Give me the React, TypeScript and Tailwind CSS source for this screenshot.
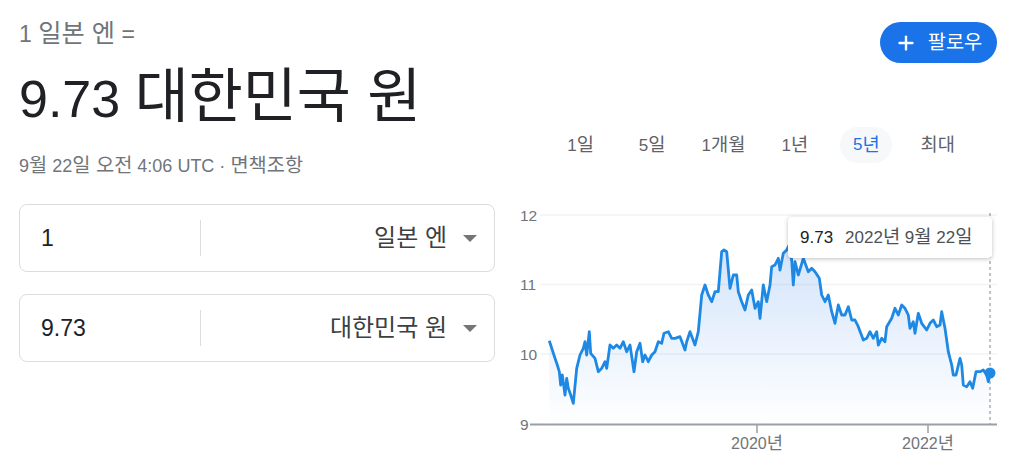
import { Plus } from "lucide-react";

// chart trace in 3x zoom coords relative to (500,195)
const RAW: [number, number][] = [
  [148, 437], [165, 490], [172, 510], [178, 530], [182, 570], [187, 540], [195, 600], [200, 550],
  [205, 580], [212, 600], [220, 625], [230, 520], [240, 480], [250, 460], [255, 440], [260, 480],
  [268, 410], [272, 475], [285, 490], [295, 530], [305, 520], [315, 500], [320, 520], [330, 450],
  [340, 460], [350, 450], [360, 460], [370, 440], [380, 470], [390, 450], [402, 530], [410, 470],
  [420, 445], [428, 500], [435, 480], [445, 500], [455, 480], [465, 470], [475, 440], [485, 445],
  [492, 415], [505, 410], [515, 430], [525, 430], [540, 425], [555, 465], [560, 440], [570, 410],
  [585, 450], [595, 410], [605, 300], [615, 270], [625, 300], [635, 320], [645, 290], [655, 290],
  [665, 170], [672, 165], [680, 170], [690, 280], [700, 240], [710, 240], [715, 290], [725, 320],
  [735, 345], [745, 300], [755, 285], [765, 340], [775, 320], [780, 370], [790, 270], [800, 320],
  [810, 270], [815, 215], [825, 210], [835, 190], [840, 225], [850, 175], [860, 165], [868, 150],
  [875, 195], [880, 270], [885, 200], [895, 240], [910, 190], [925, 230], [935, 220], [945, 230],
  [958, 250], [965, 300], [975, 320], [985, 300], [995, 350], [1005, 385], [1015, 330], [1025, 360],
  [1035, 360], [1045, 335], [1055, 375], [1065, 375], [1075, 395], [1090, 435], [1100, 430],
  [1110, 410], [1120, 430], [1130, 410], [1135, 450], [1145, 430], [1155, 440], [1160, 395],
  [1175, 370], [1185, 340], [1195, 360], [1205, 330], [1215, 340], [1225, 360], [1230, 400],
  [1240, 380], [1245, 415], [1255, 355], [1265, 385], [1280, 405], [1290, 385], [1300, 375],
  [1310, 395], [1320, 390], [1325, 350], [1335, 400], [1345, 470], [1355, 510], [1360, 540],
  [1368, 540], [1380, 490], [1385, 510], [1390, 570], [1400, 575], [1410, 560], [1418, 580],
  [1428, 530], [1440, 530], [1450, 525], [1460, 540], [1465, 560], [1471, 535],
];

const POINTS = RAW.map(([x, y]) => [500 + x / 3, 195 + y / 3]);
const LINE = POINTS.map(([x, y], i) => `${i ? "L" : "M"}${x.toFixed(1)} ${y.toFixed(1)}`).join(" ");
const AREA = `${LINE} L${POINTS[POINTS.length - 1][0].toFixed(1)} 424 L${POINTS[0][0].toFixed(1)} 424 Z`;

const RANGES: [string, string][] = [["1", "일"], ["5", "일"], ["1", "개월"], ["1", "년"], ["5", "년"], ["", "최대"]];

// Hangul in the reference renders a little larger than Noto's
function K({ children }: { children: React.ReactNode }) {
  return <span className="text-[1.1em]">{children}</span>;
}

function CurrencyBox({ amount, currency }: { amount: string; currency: string }) {
  return (
    <div className="flex h-[68px] items-center rounded-lg border border-[#dadce0]">
      <div className="w-[180px] pl-[21px] text-[23px] text-[#202124]">{amount}</div>
      <div className="h-9 w-px bg-[#dadce0]" />
      <div className="flex flex-1 items-center justify-end gap-[16px] pr-[17px]">
        <span className="text-[24px] text-[#3c4043]">{currency}</span>
        <span className="h-0 w-0 border-x-[7px] border-t-[7px] border-x-transparent border-t-[#757575]" />
      </div>
    </div>
  );
}

function Chart() {
  const grid = [215, 284.5, 354];
  return (
    <div className="relative mt-[32px] h-[271px] w-[517px]">
      <svg width={517} height={271} viewBox="500 195 517 271">
        <defs>
          <linearGradient id="fill" x1="0" y1="240" x2="0" y2="424" gradientUnits="userSpaceOnUse">
            <stop offset="0" stopColor="#1a73e8" stopOpacity="0.2" />
            <stop offset="1" stopColor="#1a73e8" stopOpacity="0" />
          </linearGradient>
        </defs>
        {grid.map((y) => (
          <line key={y} x1={540} x2={997} y1={y} y2={y} stroke="#f1f3f4" strokeWidth={1.5} />
        ))}
        <path d={AREA} fill="url(#fill)" />
        <line x1={990} x2={990} y1={213} y2={424} stroke="#80868b" strokeWidth={1} strokeDasharray="3 3" />
        <path d={LINE} fill="none" stroke="#1e88e5" strokeWidth={2.8} strokeLinejoin="round" />
        <circle cx={990} cy={373} r={5.5} fill="#1e88e5" />
        <line x1={530} x2={997} y1={424.5} y2={424.5} stroke="#9aa0a6" strokeWidth={2} />
        <line x1={757} x2={757} y1={424} y2={433} stroke="#9aa0a6" strokeWidth={1.5} />
        <line x1={928} x2={928} y1={424} y2={433} stroke="#9aa0a6" strokeWidth={1.5} />
        {[["12", 220.5], ["11", 290], ["10", 359.5], ["9", 429.5]].map(([t, y]) => (
          <text key={t} x={520} y={y} fontSize={15.5} fill="#70757a">{t}</text>
        ))}
        <text x={757} y={449} fontSize={16} fill="#70757a" textAnchor="middle">2020<tspan fontSize={17.6}>년</tspan></text>
        <text x={928} y={449} fontSize={16} fill="#70757a" textAnchor="middle">2022<tspan fontSize={17.6}>년</tspan></text>
      </svg>
      <div className="absolute left-[288px] top-[22px] flex h-[41px] w-[204px] items-center gap-[12px] rounded bg-white pl-3 text-[17px] shadow-[0_1px_4px_rgba(0,0,0,0.25)]">
        <span className="text-[#202124]">9.73</span>
        <span className="text-[#4d5156]">2022<K>년</K> 9<K>월</K> 22<K>일</K></span>
      </div>
    </div>
  );
}

export default function App() {
  return (
    <div className="flex h-[466px] w-[1017px] bg-white font-['Liberation_Sans','Noto_Sans_CJK_KR',sans-serif]">
      <div className="w-[476px] ml-[19px] shrink-0">
        <div className="mt-[19px] text-[23px] leading-7 text-[#70757a]">1 <K>일본 엔</K> =</div>
        <div className="mt-[19px] text-[52px] leading-[60px] text-[#202124]">
          9.73 <span className="text-[1.13em]">대한민국 원</span>
        </div>
        <div className="mt-[24px] text-[18px] leading-6 text-[#70757a]">
          9<K>월</K> 22<K>일 오전</K> 4:06 UTC · <K>면책조항</K>
        </div>
        <div className="mt-[26px] flex flex-col gap-[22px]">
          <CurrencyBox amount="1" currency="일본 엔" />
          <CurrencyBox amount="9.73" currency="대한민국 원" />
        </div>
      </div>
      <div className="ml-[5px] flex w-[517px] flex-col">
        <div className="mt-[22px] flex justify-end pr-[20px]">
          <button
            type="button"
            className="flex h-[41px] w-[117px] items-center justify-center gap-[11px] rounded-full bg-[#1a73e8] text-[18px] text-white"
          >
            <Plus size={22} strokeWidth={2.6} />
            <K>팔로우</K>
          </button>
        </div>
        <div className="mt-[64px] ml-[45px] flex h-9">
          {RANGES.map(([n, unit]) => {
            const active = n === "5" && unit === "년";
            return (
              <div key={n + unit} className="flex w-[71.4px] items-center justify-center">
                <span
                  className={
                    active
                      ? "flex h-9 w-[52px] items-center justify-center rounded-full bg-[#f6f8fa] text-[17px] text-[#1a73e8]"
                      : "text-[17px] text-[#5f6368]"
                  }
                >
                  {n}
                  <K>{unit}</K>
                </span>
              </div>
            );
          })}
        </div>
        <Chart />
      </div>
    </div>
  );
}
